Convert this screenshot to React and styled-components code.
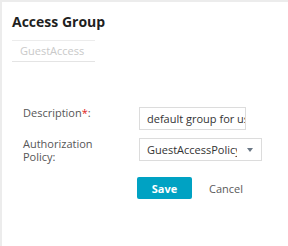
import styled, { createGlobalStyle } from 'styled-components';

const Global = createGlobalStyle`
  body {
    margin: 0;
    background: #ffffff;
    font-family: "Open Sans", "Liberation Sans", sans-serif;
  }
`;

// Outer panel with faint top/left edges
const Panel = styled.div`
  width: 288px;
  height: 246px;
  box-sizing: border-box;
  border-top: 2px solid #ececec;
  border-left: 2px solid #ececec;
  padding: 11px 0 0 10px;
`;

const Title = styled.h2`
  margin: 0;
  font-size: 14px;
  font-weight: 700;
  color: #1f1f1f;
  line-height: 18px;
`;

const NameField = styled.div`
  margin-top: 9px;
  width: 83px;
  height: 22px;
  box-sizing: border-box;
  border-top: 1px solid #ececec;
  border-bottom: 1px solid #e4e4e4;
  padding-left: 8px;
  font-size: 11px;
  line-height: 20px;
  color: #c9c9c9;
`;

const Form = styled.div`
  margin-top: 45px;
  display: grid;
  grid-template-columns: 116px auto;
  row-gap: 8px;
  padding-left: 11px;
  align-items: start;
`;

const Label = styled.label`
  font-size: 11px;
  line-height: 12.5px;
  color: #565656;
`;

const Required = styled.span`
  color: #e02020;
`;

const Input = styled.div`
  width: ${p => p.$w}px;
  height: 23px;
  box-sizing: border-box;
  border: 1px solid #dcdcdc;
  padding: 0 7px;
  font-size: 11px;
  line-height: 21px;
  color: #333;
  white-space: nowrap;
  overflow: hidden;
  display: flex;
  align-items: center;
  justify-content: space-between;
`;

const Caret = styled.span`
  width: 0;
  height: 0;
  border-left: 3.5px solid transparent;
  border-right: 3.5px solid transparent;
  border-top: 4px solid #6a7785;
  margin-right: 1px;
  flex: none;
`;

const Clip = styled.span`
  overflow: hidden;
  width: 90px;
`;

const Actions = styled.div`
  display: flex;
  align-items: center;
  gap: 17px;
  margin: 14px 0 0 125px;
`;

const Button = styled.button`
  width: 55px;
  height: 22px;
  border: none;
  border-radius: 2px;
  background: #00a2c3;
  color: #fff;
  font-family: inherit;
  font-size: 11px;
  font-weight: 700;
  padding: 0;
`;

const Link = styled.span`
  font-size: 11px;
  color: #5a5a5a;
`;

export default function App() {
  return (
    <>
      <Global />
      <Panel>
        <Title>Access Group</Title>
        <NameField>GuestAccess</NameField>
        <Form>
          <Label>Description<Required>*</Required>:</Label>
          <Input $w={107}>default group for users</Input>
          <Label>Authorization<br />Policy:</Label>
          <Input $w={123}>
            <Clip>GuestAccessPolicy</Clip>
            <Caret />
          </Input>
        </Form>
        <Actions>
          <Button>Save</Button>
          <Link>Cancel</Link>
        </Actions>
      </Panel>
    </>
  );
}
